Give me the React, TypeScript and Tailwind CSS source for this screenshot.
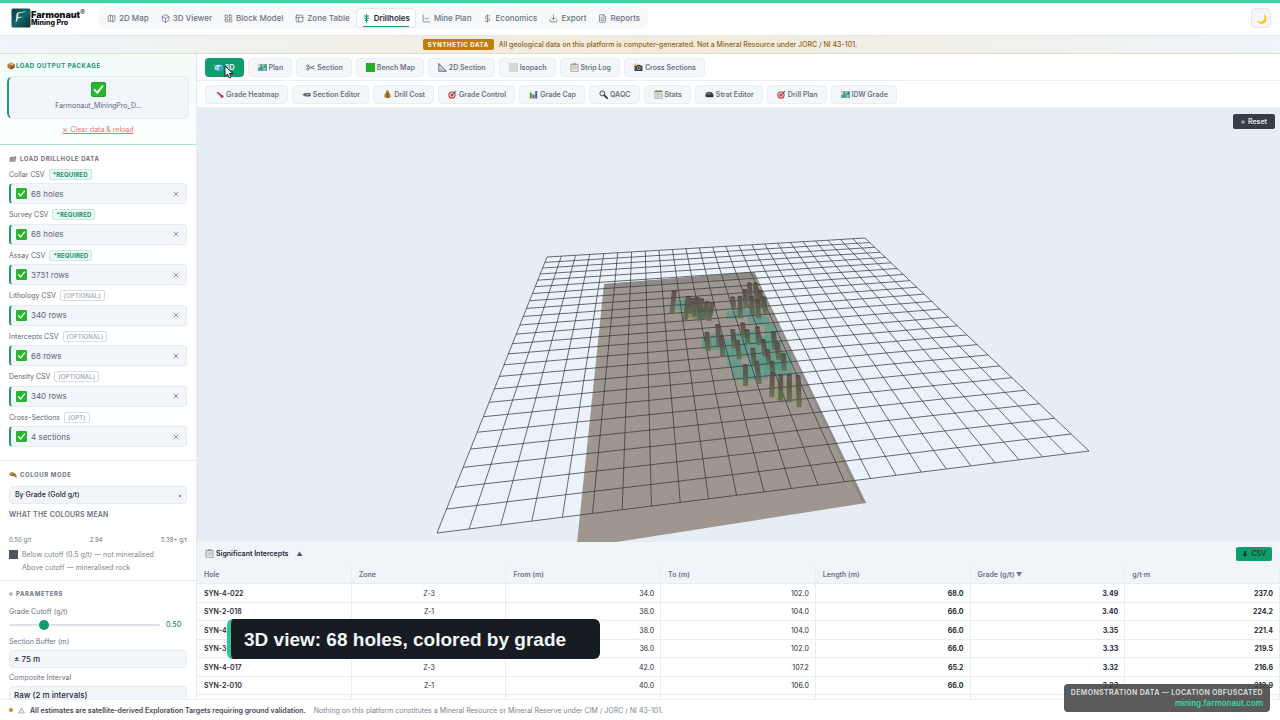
import type { ReactNode } from 'react'
import { Map as MapIcon, Box, LayoutGrid, PanelsTopLeft, ChartLine, DollarSign, Download, FileText } from 'lucide-react'

/* ---------- small colour icons ---------- */

const art: Record<string, ReactNode> = {
  package: (
    <>
      <path d="M8 1 15 4.300v7.400L8 15 1 11.700V4.300z" fill="#a9743f" />
      <path d="M8 1 15 4.300 8 7.500 1 4.300z" fill="#c99a63" />
      <path d="M8 7.500V15l7-3.300V4.300z" fill="#7e5230" />
      <path d="m4 2.900 7 3.200v3l1.800-.9V5.300l-7-3.200z" fill="#e2c79d" />
    </>
  ),
  check: (
    <>
      <rect x=".5" y=".5" width="15" height="15" rx="1.500" fill="#22b82a" stroke="#1a9a22" />
      <path d="m3.800 8.400 2.900 3.100 5.600-7" fill="none" stroke="#fff" strokeWidth="2.100" strokeLinecap="round" />
    </>
  ),
  folder: (
    <>
      <path d="M2 4.500 7 3l1 1 6-1.500v3L12 13H1z" fill="#70757a" />
      <path d="M3.500 7 15.500 5.500 12.500 13H1z" fill="#9ba0a5" />
      <path d="m5 5 8-1.700" stroke="#e8eaec" />
    </>
  ),
  palette: (
    <>
      <path d="M1 5c3-4 9-3 12.500 1.500 2.500 3 3 7 0 6.500-2-.3-2-2-4.500-2.500C5 11-1.500 9 1 5z" fill="#b77a3c" />
      <circle cx="4" cy="5.500" r="1.500" fill="#e3b33a" />
      <circle cx="8" cy="5.500" r="1.500" fill="#c8403a" />
      <circle cx="11.500" cy="8.500" r="1.400" fill="#3f8f65" />
      <circle cx="5.500" cy="8.500" r="1.300" fill="#416fae" />
    </>
  ),
  ice: (
    <>
      <path d="M1 5 7 3l8 1.500V12l-6 2-8-1.500z" fill="#7cc8ea" />
      <path d="m1 5 8 1.500 6-2L7 3z" fill="#c6ecfa" />
      <path d="M9 6.500V14l6-2V4.500z" fill="#4d9fcb" />
      <path d="M3 7v4M6 7.500v4" stroke="#d8f3fc" />
    </>
  ),
  map: (
    <>
      <path d="M0 2h16v12H0z" fill="#4aa6a8" />
      <path d="M0 2h5v4L2 9 0 8zM7 2h6l-2 5-3-1zM9 8l5 1-2 5-3-1z" fill="#d3d6a6" />
      <path d="M5.300 2v12M10.600 2v12" stroke="#2c6f86" />
      <path d="M13 3v5" stroke="#2d3c49" />
    </>
  ),
  scissors: (
    <>
      <path d="M4.500 6 15 11M4.500 10 15 5" stroke="#535b66" strokeWidth="1.500" />
      <circle cx="3" cy="5" r="1.800" fill="none" stroke="#535b66" strokeWidth="1.400" />
      <circle cx="3" cy="11" r="1.800" fill="none" stroke="#535b66" strokeWidth="1.400" />
    </>
  ),
  green: <rect x=".5" y=".5" width="15" height="15" fill="#20b020" stroke="#159015" />,
  grey: <rect x=".5" y=".5" width="15" height="15" fill="#d6d8da" stroke="#c9ccd0" />,
  ruler: (
    <>
      <path d="M1.500 1.500v13h13z" fill="none" stroke="#6d7785" strokeWidth="2" />
      <path d="M4.500 8.500v3h3z" fill="none" stroke="#8a93a0" />
    </>
  ),
  clipboard: (
    <>
      <rect x="1" y="1.500" width="14" height="14" fill="#a58d80" />
      <rect x="2.500" y="3" width="11" height="11.500" fill="#e3e4e3" />
      <rect x="5" y=".5" width="6" height="2.500" fill="#8b9096" />
      <path d="M4.500 5.500h7M4.500 8h7M4.500 10.500h7" stroke="#aab0b5" />
    </>
  ),
  notes: (
    <>
      <rect x="1.500" y="1.500" width="13" height="13.500" fill="#dfe3dd" stroke="#8d948c" />
      <path d="M2 2.500h12" stroke="#6d756c" strokeWidth="2" />
      <path d="M4 6h8M4 8.500h8M4 11h8" stroke="#a3aca4" />
    </>
  ),
  camera: (
    <>
      <path d="M1 5h4l1-2h5l1 2h3v9H1z" fill="#3d4043" />
      <circle cx="8.500" cy="9" r="3.300" fill="#a9b4bd" />
      <circle cx="8.500" cy="9" r="1.700" fill="#2a3742" />
      <path d="M2 0l1 2 2-1-1 2 2 1-3 1-2 1V3z" fill="#f0a23a" />
    </>
  ),
  thermo: (
    <>
      <path d="M4 4.500 10 9" stroke="#7d2b3c" strokeWidth="2" strokeLinecap="round" />
      <path d="m6.500 6.500 5.500 4.500" stroke="#d3304c" strokeWidth="2.500" />
      <circle cx="12.500" cy="11.500" r="2.500" fill="#c3263f" />
    </>
  ),
  pencil: (
    <>
      <path d="M1 8.500 5 5.500h9l1.500 1v4l-1.500 1H5z" fill="#5d6672" />
      <path d="M6 8h7" stroke="#c7ccd2" strokeWidth="1.200" />
    </>
  ),
  money: (
    <>
      <path d="M5.500 1h5L9.500 4C13 6 14.500 10 13.500 13c-.5 2-10.500 2-11 0-1-3 .5-7 4-9z" fill="#b98a35" />
      <path d="M5.500 4.200h5" stroke="#6d4a17" strokeWidth="1.300" />
      <path d="M10 7.500C8 6 5.800 7 6.200 8.500s3.600 1 3.600 2.500S7 13 5.800 11.500M8 6v8" fill="none" stroke="#5d3f14" />
    </>
  ),
  target: (
    <>
      <circle cx="7" cy="9" r="6.500" fill="#c73740" />
      <circle cx="7" cy="9" r="4.500" fill="#f0dfe0" />
      <circle cx="7" cy="9" r="2.700" fill="#c73740" />
      <path d="m7 9 6-6" stroke="#3d4753" strokeWidth="1.200" />
      <path d="m11 3 2-2.500.5 2L16 3l-2.500 2h-2z" fill="#3d88b8" />
    </>
  ),
  bars: (
    <>
      <rect x="1" y="1" width="14" height="14" fill="#eef1f3" />
      <rect x="1.500" y="5" width="3.500" height="10" fill="#2e9a4a" />
      <rect x="6.200" y="8" width="3.500" height="7" fill="#c8323b" />
      <rect x="11" y="2" width="3.500" height="13" fill="#2c62b5" />
    </>
  ),
  lens: (
    <>
      <circle cx="6" cy="6" r="4.500" fill="#cfe3ee" stroke="#434a52" strokeWidth="1.600" />
      <path d="m9.500 9.500 5 5" stroke="#23282e" strokeWidth="2.800" strokeLinecap="round" />
    </>
  ),
  rock: (
    <>
      <path d="M1 8c0-3 4-5.500 8-5 4 .5 6 4 6.500 7.500L14 13H3L.5 11z" fill="#3c4045" />
      <path d="M3 7c2-3 6-3 8-2L8 8z" fill="#74797f" />
      <path d="M2 11h12" stroke="#191b1e" />
    </>
  ),
  gear: <circle cx="8" cy="8" r="5" fill="none" stroke="currentColor" strokeWidth="3" />,
  warn: (
    <>
      <path d="M8 2.500 14.500 13.500h-13z" fill="none" stroke="#6b7280" strokeWidth="1.300" />
      <path d="M8 6.500v4" stroke="#6b7280" />
    </>
  ),
}

function Glyph({ name, className = 'size-[9px]' }: { name: string; className?: string }) {
  return (
    <svg viewBox="0 0 16 16" className={`shrink-0 ${className}`} aria-hidden="true">
      {art[name]}
    </svg>
  )
}

function DrillIcon() {
  return (
    <svg viewBox="0 0 16 16" className="size-[9px] shrink-0" fill="none" stroke="#0f9d6c" strokeWidth="1.800" aria-hidden="true">
      <path d="M8 .5v15M4 3.500h8M4 7.500h8M5 11.500h6" />
      <path d="M4.500 3.500 8 6l3.500-2.500M4.500 7.500 8 10l3.500-2.500" strokeWidth="1.200" />
    </svg>
  )
}

/* ---------- header ---------- */

const nav: { label: string; icon: ReactNode; active?: boolean }[] = [
  { label: '2D Map', icon: <MapIcon className="size-[9px]" /> },
  { label: '3D Viewer', icon: <Box className="size-[9px]" /> },
  { label: 'Block Model', icon: <LayoutGrid className="size-[9px]" /> },
  { label: 'Zone Table', icon: <PanelsTopLeft className="size-[9px]" /> },
  { label: 'Drillholes', icon: <DrillIcon />, active: true },
  { label: 'Mine Plan', icon: <ChartLine className="size-[9px]" /> },
  { label: 'Economics', icon: <DollarSign className="size-[9px]" /> },
  { label: 'Export', icon: <Download className="size-[9px]" /> },
  { label: 'Reports', icon: <FileText className="size-[9px]" /> },
]

function Header() {
  return (
    <header className="flex h-[35px] shrink-0 items-center border-t-[3px] border-[#3dd6a3] bg-white pr-[9px] pb-0.5 pl-[11px]">
      <a href="#home" className="flex w-[87px] items-center">
        <svg viewBox="0 0 20 20" className="size-5 shrink-0" aria-hidden="true">
          <defs>
            <linearGradient id="logo" x1="0" y1="0" x2="1" y2="1">
              <stop offset="0" stopColor="#0d3b3f" />
              <stop offset=".5" stopColor="#15666a" />
              <stop offset="1" stopColor="#0b2d33" />
            </linearGradient>
          </defs>
          <rect width="19" height="19" x=".5" y=".5" rx="1.500" fill="url(#logo)" />
          <path d="M4.500 14.500c1-4 .5-7.500 1.500-9.500 2-1.300 6-.8 9-1.800-1.500 1.600-5 1.300-7.500 2.300l-.4 3.500 4.700-.3c-1 1-3 1.200-4.900 1.500-.3 2-1 3.500-2.400 4.300z" fill="#dff3ee" />
        </svg>
        <span className="flex flex-col text-[#101418]">
          <span className="flex text-[9px] leading-[9px] font-black">
            Farmonaut<span className="text-[7px] leading-[5px]">®</span>
          </span>
          <span className="text-[7px] leading-[8px] font-extrabold">Mining Pro</span>
        </span>
      </a>
      <nav className="flex h-[22px] items-center rounded-md bg-[#f7f8f9] pr-0.5 pl-[3px]">
        {nav.map((n) => (
          <button
            key={n.label}
            type="button"
            className={
              n.active
                ? 'relative flex h-5 items-center gap-[3px] rounded border border-[#e3e8ec] bg-white px-[5px] text-[8px] font-semibold text-[#1f2933]'
                : 'flex h-5 items-center gap-[3px] px-1.5 text-[8px] font-medium text-[#6b7280]'
            }
          >
            {n.icon}
            {n.label}
            {n.active && <span className="absolute inset-x-1.5 bottom-0 h-px bg-[#0f9d6c]" />}
          </button>
        ))}
      </nav>
      <button type="button" aria-label="Dark mode" className="ml-auto flex size-5 items-center justify-center rounded border border-[#e3e7ec] bg-[#f3f5f8] text-[9px]">
        🌙
      </button>
    </header>
  )
}

/* ---------- sidebar ---------- */

const files = [
  ['Collar CSV', '*REQUIRED', '68 holes'],
  ['Survey CSV', '*REQUIRED', '68 holes'],
  ['Assay CSV', '*REQUIRED', '3731 rows'],
  ['Lithology CSV', '(OPTIONAL)', '340 rows'],
  ['Intercepts CSV', '(OPTIONAL)', '68 rows'],
  ['Density CSV', '(OPTIONAL)', '340 rows'],
  ['Cross-Sections', '(OPT)', '4 sections'],
]

function Heading({ icon, children, className = 'gap-[3px] text-[#6b7280]' }: { icon: string; children: ReactNode; className?: string }) {
  return (
    <h2 className={`flex items-center text-[6px] leading-[10px] font-bold tracking-widest uppercase ${className}`}>
      <Glyph name={icon} className={icon === 'gear' ? 'size-1' : 'size-2'} />
      {children}
    </h2>
  )
}

function Sidebar() {
  return (
    <aside className="w-[197px] shrink-0 overflow-hidden border-r border-[#e3e9ee] bg-white">
      <section className="flex flex-col border-b border-[#a9dfcb] bg-linear-to-b from-[#f0fcf7] to-[#fbfffd] px-[7px] pt-[7px] pb-[9px]">
        <Heading icon="package" className="gap-px text-[#15906a]">Load output package</Heading>
        <div className="mt-[5px] flex h-[43px] flex-col items-center rounded-md border border-l-2 border-[#e6ecf2] border-l-[#229a73] bg-[#f2f6fa] pt-[5px]">
          <Glyph name="check" className="size-[15px]" />
          <span className="mt-[3px] text-[7px] leading-[12px] text-[#5d6672]">Farmonaut_MiningPro_D...</span>
        </div>
        <button type="button" className="mt-1.5 self-center text-[7px] leading-[10px] text-[#ef7575] underline">
          ⨯ Clear data &amp; reload
        </button>
      </section>

      <section className="border-b border-[#e9edf1] px-[9px] pt-[9px] pb-[13px]">
        <Heading icon="folder">Load drillhole data</Heading>
        <div className="mt-[5px] flex min-h-[278px] flex-col justify-between">
          {files.map(([label, tag, value]) => (
            <div key={label} className="flex flex-col gap-1">
              <div className="flex h-2.5 items-center gap-1 text-[7px] text-[#5d6672]">
                {label}
                <span
                  className={
                    tag === '*REQUIRED'
                      ? 'rounded-xs border border-[#c5eadd] bg-[#eaf9f3] px-[3px] text-[6px] leading-[9px] font-bold tracking-wide text-[#15906a]'
                      : 'rounded-xs border border-[#d8dde3] px-[3px] text-[6px] leading-[9px] font-medium tracking-wide text-[#9aa2ad]'
                  }
                >
                  {tag}
                </span>
              </div>
              <div className="flex h-[21px] items-center rounded border border-l-2 border-[#e6ecf2] border-l-[#229a73] bg-[#f2f6fa] pr-[5px] pl-[5px]">
                <Glyph name="check" className="size-[11px]" />
                <span className="ml-1 text-[8px] text-[#5d6672]">{value}</span>
                <button type="button" aria-label={`Remove ${label}`} className="ml-auto flex size-2.5 items-center justify-center">
                  <svg viewBox="0 0 8 8" className="size-[6px]" stroke="#6b7280" aria-hidden="true">
                    <path d="m1 1 6 6M7 1 1 7" />
                  </svg>
                </button>
              </div>
            </div>
          ))}
        </div>
      </section>

      <section className="border-b border-[#e9edf1] px-[9px] pt-[9px] pb-1.5">
        <Heading icon="palette">Colour mode</Heading>
        <div className="relative mt-1.5">
          <select aria-label="Colour mode" className="block h-[18px] w-full appearance-none rounded border border-[#e6ecf2] bg-[#f2f6fa] px-[5px] text-[7px] leading-4 font-medium text-[#1f2933]">
            <option>By Grade (Gold g/t)</option>
          </select>
          <span className="pointer-events-none absolute top-[9px] right-1.5 size-0.5 rounded-full bg-[#5d6672]" />
        </div>
        <h3 className="mt-1.5 text-[7px] leading-[10px] font-semibold tracking-wide text-[#6b7280]">WHAT THE COLOURS MEAN</h3>
        <div className="mt-4 flex justify-between text-[6px] leading-[8px] text-[#6b7280]">
          <span>0.50 g/t</span>
          <span>2.94</span>
          <span>5.38+ g/t</span>
        </div>
        <ul className="mt-1 text-[7px] leading-[13px] text-[#7b8490]">
          <li className="flex items-center gap-1">
            <span className="size-[9px] bg-[#4b5563]" />
            Below cutoff (0.5 g/t) — not mineralised
          </li>
          <li className="pl-[13px]">Above cutoff — mineralised rock</li>
        </ul>
      </section>

      <section className="px-[9px] pt-2">
        <Heading icon="gear">Parameters</Heading>
        <label htmlFor="cutoff" className="mt-2 block text-[7px] leading-[10px] text-[#6b7280]">Grade Cutoff (g/t)</label>
        <div className="mt-[3px] flex h-2.5 items-center gap-1.5">
          <input
            id="cutoff"
            type="range"
            min="0.1"
            max="2"
            step="0.1"
            defaultValue="0.5"
            className="h-0.5 min-w-0 flex-1 appearance-none rounded bg-[#dde3e9] [&::-webkit-slider-thumb]:size-2.5 [&::-webkit-slider-thumb]:appearance-none [&::-webkit-slider-thumb]:rounded-full [&::-webkit-slider-thumb]:bg-[#0f9d6c]"
          />
          <output htmlFor="cutoff" className="w-[21px] text-[7px] leading-[10px] font-medium text-[#15906a]">0.50</output>
        </div>
        <label htmlFor="buffer" className="mt-[7px] block text-[7px] leading-[10px] text-[#6b7280]">Section Buffer (m)</label>
        <select id="buffer" className="mt-[3px] block h-[18px] w-full appearance-none rounded border border-[#e6ecf2] bg-[#f2f6fa] px-1 text-[8px] leading-4 font-medium text-[#1f2933]">
          <option>± 75 m</option>
        </select>
        <label htmlFor="interval" className="mt-[5px] block text-[7px] leading-[10px] text-[#6b7280]">Composite Interval</label>
        <select id="interval" className="mt-[3px] block h-[18px] w-full appearance-none rounded border border-[#e6ecf2] bg-[#f2f6fa] px-1 text-[8px] leading-4 font-medium text-[#1f2933]">
          <option>Raw (2 m intervals)</option>
        </select>
      </section>
    </aside>
  )
}

/* ---------- toolbars ---------- */

const views = [
  ['ice', '3D'],
  ['map', 'Plan'],
  ['scissors', 'Section'],
  ['green', 'Bench Map'],
  ['ruler', '2D Section'],
  ['grey', 'Isopach'],
  ['clipboard', 'Strip Log'],
  ['camera', 'Cross Sections'],
]

const tools = [
  ['thermo', 'Grade Heatmap'],
  ['pencil', 'Section Editor'],
  ['money', 'Drill Cost'],
  ['target', 'Grade Control'],
  ['bars', 'Grade Cap'],
  ['lens', 'QAQC'],
  ['notes', 'Stats'],
  ['rock', 'Strat Editor'],
  ['target', 'Drill Plan'],
  ['map', 'IDW Grade'],
]

function Toolbar({ items, active }: { items: string[][]; active?: string }) {
  return (
    <div className="flex h-[27px] shrink-0 items-center gap-1 border-b border-[#eceff2] bg-white px-2 pt-px">
      {items.map(([icon, label]) => (
        <button
          key={label}
          type="button"
          className={
            label === active
              ? 'flex h-[19px] items-center gap-0.5 rounded bg-[#0f9d6c] px-[9px] text-[7px] font-semibold text-white'
              : 'flex h-[19px] items-center gap-0.5 rounded border border-[#e9eef3] bg-[#f4f7fa] pr-2 pl-[9px] text-[7px] font-semibold text-[#6b7280]'
          }
        >
          <Glyph name={icon} />
          {label}
        </button>
      ))}
    </div>
  )
}

/* ---------- 3D scene ---------- */

const quad = [[547, 257], [865, 238], [1089, 451], [437, 533]]
const cells = 24

function project(u: number, v: number) {
  const [[x0, y0], [x1, y1], [x2, y2], [x3, y3]] = quad
  const dx1 = x1 - x2, dx2 = x3 - x2, dx3 = x0 - x1 + x2 - x3
  const dy1 = y1 - y2, dy2 = y3 - y2, dy3 = y0 - y1 + y2 - y3
  const det = dx1 * dy2 - dx2 * dy1
  const g = (dx3 * dy2 - dx2 * dy3) / det
  const h = (dx1 * dy3 - dx3 * dy1) / det
  const w = g * u + h * v + 1
  return [
    ((x1 - x0 + g * x1) * u + (x3 - x0 + h * x3) * v + x0) / w,
    ((y1 - y0 + g * y1) * u + (y3 - y0 + h * y3) * v + y0) / w,
  ]
}

const gridPath = Array.from({ length: cells + 1 }, (_, i) => {
  const t = i / cells
  return `M${project(t, 0)}L${project(t, 1)}M${project(0, t)}L${project(1, t)}`
}).join('')

/* collar x, collar y, toe x, toe y in thirds of a unit */
const holes = [
  [103, 124, 96, 190], [145, 140, 136, 210], [158, 146, 150, 192], [172, 143, 163, 200], [185, 148, 178, 212], [201, 155, 192, 206], [217, 158, 206, 213],
  [278, 142, 282, 180], [300, 140, 301, 205], [314, 120, 318, 172], [328, 100, 332, 155], [346, 100, 350, 158], [334, 140, 338, 195], [360, 122, 364, 175], [352, 150, 356, 205], [372, 142, 376, 192],
  [201, 248, 205, 303], [233, 225, 237, 288], [244, 258, 249, 320], [278, 240, 284, 295], [292, 272, 298, 328], [308, 220, 312, 262], [321, 240, 324, 282], [352, 232, 357, 285],
  [370, 270, 375, 320], [382, 300, 388, 345], [400, 247, 405, 300], [412, 280, 416, 330], [430, 312, 433, 362],
  [338, 296, 344, 350], [350, 335, 358, 402], [316, 345, 317, 408], [396, 335, 398, 368],
  [397, 368, 395, 442], [422, 375, 422, 457], [448, 375, 448, 457], [474, 377, 478, 472],
]

const blobs = [
  [676, 300, 10, 10], [683, 298, 6, 12], [692, 308, 16, 8],
  [726, 311, 12, 8], [736, 309, 16, 8], [748, 311, 14, 12], [757, 316, 12, 9],
  [702, 336, 10, 14], [711, 334, 12, 16], [720, 338, 14, 18], [731, 332, 16, 22], [727, 352, 14, 14], [742, 330, 14, 28], [755, 336, 12, 30],
  [765, 324, 12, 26], [768, 340, 14, 30], [778, 352, 14, 24], [732, 364, 18, 16], [748, 358, 20, 22], [764, 362, 16, 14],
]

function Scene() {
  return (
    <div className="relative min-h-0 flex-1 overflow-hidden bg-[#e6edf5]">
      <svg viewBox="197 108 1083 434" preserveAspectRatio="xMidYMid slice" className="block size-full" role="img" aria-label="Drillholes in 3D">
        <defs>
          <linearGradient id="hole" x1="0" y1="0" x2="0" y2="1">
            <stop offset=".4" stopColor="#574f48" />
            <stop offset=".7" stopColor="#566450" />
            <stop offset="1" stopColor="#686b50" />
          </linearGradient>
        </defs>
        <path d={`M${quad.join('L')}z`} fill="#ebf2f9" />
        <path d="M604 284 754 272 866 503 610 543H577z" fill="#9f978f" />
        <path d="M604 284 754 272 757 277 604 288z" fill="#908b88" />
        <path d="M754 272 866 503 862 503 756 278z" fill="#8f8b88" />
        <g fill="#4c9c88">
          {blobs.map(([x, y, w, h]) => (
            <rect key={`${x}-${y}`} x={x} y={y} width={w} height={h} rx="2" opacity=".6" />
          ))}
        </g>
        <path d="M685 305l28 2v9l-16 4-12-4z" fill="#76823c" opacity=".5" />
        <path d="M770 382h28l4 20-26-2z" fill="#8a9447" opacity=".35" />
        <path d={gridPath} fill="none" stroke="#30363b" strokeWidth=".8" opacity=".9" />
        {holes.map(([x, y, tx, ty]) => {
          const [a, b, c, d] = [640 + x / 3, 250 + y / 3, 640 + tx / 3, 250 + ty / 3]
          return (
            <g key={`${x}-${y}`} opacity=".85">
              <path d={`M${a - 2.500} ${b}h5L${c + 2.500} ${d}h-5z`} fill="url(#hole)" />
              <ellipse cx={a} cy={b} rx="2.500" ry="1" fill="#4a443f" />
            </g>
          )
        })}
      </svg>
      <button type="button" className="absolute top-[6px] right-[5px] flex h-[15px] items-center gap-[3px] rounded-xs bg-[#363d47] px-2 text-[7px] font-semibold text-[#e5e7eb]">
        <Glyph name="gear" className="size-1" />
        Reset
      </button>
    </div>
  )
}

/* ---------- intercept table ---------- */

const columns = ['Hole', 'Zone', 'From (m)', 'To (m)', 'Length (m)', 'Grade (g/t)', 'g/t·m']
const rows = [
  ['SYN-4-022', 'Z-3', '34.0', '102.0', '68.0', '3.49', '237.0'],
  ['SYN-2-018', 'Z-1', '38.0', '104.0', '66.0', '3.40', '224.2'],
  ['SYN-4-021', 'Z-3', '38.0', '104.0', '66.0', '3.35', '221.4'],
  ['SYN-3-009', 'Z-2', '36.0', '102.0', '66.0', '3.33', '219.5'],
  ['SYN-4-017', 'Z-3', '42.0', '107.2', '65.2', '3.32', '216.6'],
  ['SYN-2-010', 'Z-1', '40.0', '106.0', '66.0', '3.23', '212.9'],
  ['', '', '', '', '', '', ''],
]

function cellStyle(column: number) {
  if (column === 0) return 'font-semibold'
  if (column === 1) return 'text-center'
  if (column < 4) return 'text-right'
  return 'text-right font-bold'
}

function Intercepts() {
  return (
    <section className="h-[157px] shrink-0 overflow-hidden bg-white">
      <div className="flex h-[23px] items-center bg-[#f1f5f9] pr-2 pl-2">
        <Glyph name="clipboard" />
        <h2 className="ml-0.5 text-[7px] font-semibold text-[#1f2933]">Significant Intercepts</h2>
        <span className="ml-2 text-[6px] text-[#4b5563]">▲</span>
        <button type="button" className="ml-auto flex h-3.5 items-center gap-[3px] rounded-xs bg-[#0f9d6c] px-1.5 text-[7px] font-medium text-[#0b3b2b]">
          <svg viewBox="0 0 8 8" className="size-[6px]" fill="currentColor" aria-hidden="true">
            <path d="M2.500 0h3v4h2L4 8 .5 4h2z" />
          </svg>
          CSV
        </button>
      </div>
      <table className="w-full table-fixed border-separate border-spacing-0 text-[7px]">
        <thead>
          <tr className="h-[19px] bg-[#f1f5f9] text-left text-[#6b7280]">
            {columns.map((c) => (
              <th key={c} scope="col" className="border-r border-b border-[#e8edf1] py-0 pr-1.5 pl-[7px] font-semibold">
                {c}
                {c === 'Grade (g/t)' && <span className="text-[6px]"> ▼</span>}
              </th>
            ))}
          </tr>
        </thead>
        <tbody>
          {rows.map((r, i) => (
            <tr key={i} className="h-[18px] text-[#1f2933] odd:h-[19px]">
              {r.map((cell, j) => (
                <td key={j} className={`border-r border-b border-[#e8edf1] py-0 pr-1.5 pl-[7px] ${cellStyle(j)}`}>
                  {cell}
                </td>
              ))}
            </tr>
          ))}
        </tbody>
      </table>
    </section>
  )
}

export default function App() {
  return (
    <div className="relative flex h-screen flex-col overflow-hidden bg-white font-['Inter',sans-serif] leading-none">
      <Header />
      <div className="flex h-[19px] shrink-0 items-center justify-center gap-[5px] border-t border-b border-t-[#e6e8ea] border-b-[#e6ddc6] bg-linear-to-r from-[#eff5fb] via-[#f2ead8] to-[#eff5fb]">
        <strong className="rounded-xs bg-[#c27d0c] px-[5px] text-[6px] leading-[11px] font-bold tracking-widest text-white">SYNTHETIC DATA</strong>
        <p className="text-[7px] font-medium text-[#926522]">
          All geological data on this platform is computer-generated. Not a Mineral Resource under JORC / NI 43-101.
        </p>
      </div>
      <div className="flex min-h-0 flex-1">
        <Sidebar />
        <main className="flex min-w-0 flex-1 flex-col">
          <Toolbar items={views} active="3D" />
          <Toolbar items={tools} />
          <Scene />
          <Intercepts />
        </main>
      </div>
      <footer className="flex h-[21px] shrink-0 items-center border-t border-[#eef1f4] bg-white pl-[9px] text-[7px]">
        <span className="size-1 rounded-full bg-[#c98a16]" />
        <span className="ml-[5px] flex">
          <Glyph name="warn" className="size-[7px]" />
        </span>
        <strong className="ml-[5px] font-semibold text-[#3f4853]">All estimates are satellite-derived Exploration Targets requiring ground validation.</strong>
        <span className="ml-2 text-[#7b8490]">Nothing on this platform constitutes a Mineral Resource or Mineral Reserve under CIM / JORC / NI 43-101.</span>
      </footer>

      <div className="absolute bottom-[61px] left-[227px] flex h-10 items-center rounded-md border-l-4 border-[#2fc48d] bg-[#161c22] pr-[34px] pl-[13px] font-['Liberation_Sans',sans-serif] text-[19px] font-bold text-[#f3f6f8]">
        3D view: 68 holes, colored by grade
      </div>
      <div className="absolute right-2.5 bottom-2 flex h-7 flex-col items-end justify-center rounded bg-[#484848]/90 px-[7px] leading-[10px] text-[#d4d4d4]">
        <span className="text-[7px] font-bold tracking-wider">DEMONSTRATION DATA — LOCATION OBFUSCATED</span>
        <span className="text-[8px] font-semibold text-[#3dd6a3]">mining.farmonaut.com</span>
      </div>
      <svg viewBox="0 0 10 14" className="absolute top-[65px] left-[224px] h-3.5 w-2.5" aria-hidden="true">
        <path d="M1 1v10.500l2.500-2.300L5.200 13l1.900-.9-1.700-3.500H9z" fill="#fff" stroke="#111" strokeWidth=".9" />
      </svg>
    </div>
  )
}
